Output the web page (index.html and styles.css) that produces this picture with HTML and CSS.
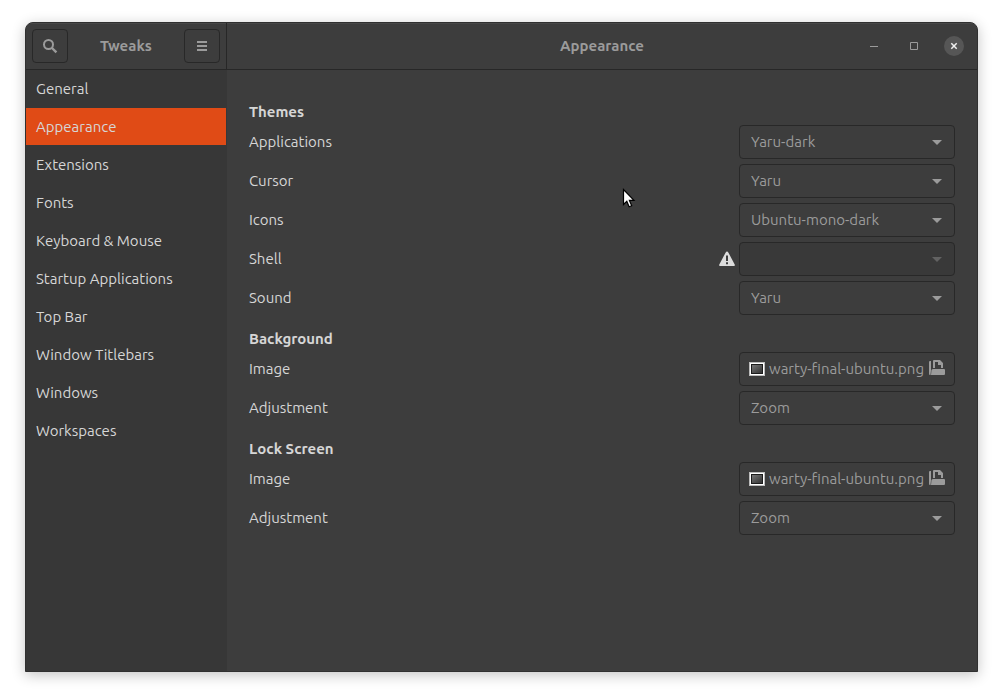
FILE: index.html
```html
<!DOCTYPE html>
<html lang="en">
<head>
<meta charset="utf-8">
<title>Tweaks</title>
<link rel="stylesheet" href="styles.css">
</head>
<body>
<div class="window">
  <header class="header">
    <div class="header-side">
      <button class="tool" type="button" aria-label="Search">
        <svg width="16" height="16" viewBox="0 0 16 16"><circle cx="6.5" cy="6.5" r="4.5" fill="none" stroke="currentColor" stroke-width="2"/><path d="M10 10l4.4 4.4" stroke="currentColor" stroke-width="2.4"/></svg>
      </button>
      <h1 class="title">Tweaks</h1>
      <button class="tool" type="button" aria-label="Menu">
        <svg width="16" height="16" viewBox="0 0 16 16"><path d="M3 3h10v2H3zM3 7h10v2H3zM3 11h10v2H3z" fill="currentColor"/></svg>
      </button>
    </div>
    <div class="header-main">
      <h2 class="title">Appearance</h2>
      <div class="controls">
        <button class="control" type="button" aria-label="Minimize"><svg width="16" height="16" viewBox="0 0 16 16"><path d="M4 8h8v1H4z" fill="currentColor"/></svg></button>
        <button class="control" type="button" aria-label="Maximize"><svg width="16" height="16" viewBox="0 0 16 16"><path d="M4.500 4.500h7v7h-7z" fill="none" stroke="currentColor"/></svg></button>
        <button class="control close" type="button" aria-label="Close"><svg width="16" height="16" viewBox="0 0 16 16"><path d="M5.300 5.300l5.400 5.400M10.700 5.300l-5.400 5.400" stroke="currentColor" stroke-width="1.500"/></svg></button>
      </div>
    </div>
  </header>
  <div class="body">
    <nav class="sidebar">
      <a class="item" href="#general">General</a>
      <a class="item active" href="#appearance" aria-current="page">Appearance</a>
      <a class="item" href="#extensions">Extensions</a>
      <a class="item" href="#fonts">Fonts</a>
      <a class="item" href="#keyboard">Keyboard &amp; Mouse</a>
      <a class="item" href="#startup">Startup Applications</a>
      <a class="item" href="#topbar">Top Bar</a>
      <a class="item" href="#titlebars">Window Titlebars</a>
      <a class="item" href="#windows">Windows</a>
      <a class="item" href="#workspaces">Workspaces</a>
    </nav>
    <main class="content">
      <section class="group">
        <h3 class="group-title">Themes</h3>
        <div class="rows">
          <div class="row"><label for="apps">Applications</label><span class="combo"><select id="apps"><option>Yaru-dark</option></select></span></div>
          <div class="row"><label for="cursor">Cursor</label><span class="combo"><select id="cursor"><option>Yaru</option></select></span></div>
          <div class="row"><label for="icons">Icons</label><span class="combo"><select id="icons"><option>Ubuntu-mono-dark</option></select></span></div>
          <div class="row"><label for="shell">Shell</label>
            <svg class="warning" width="16" height="16" viewBox="0 0 16 16"><path fill-rule="evenodd" d="M8 .5c.6 0 1 .3 1.300.9l6.400 12c.5 1 .2 1.600-.9 1.600H1.200c-1.100 0-1.400-.6-.9-1.600l6.400-12C7 .8 7.400.5 8 .5zM7 4.500v5.500h2V4.500zM7 11.200v2h2v-2z" fill="currentColor"/></svg>
            <span class="combo disabled"><select id="shell" disabled></select></span></div>
          <div class="row"><label for="sound">Sound</label><span class="combo"><select id="sound"><option>Yaru</option></select></span></div>
        </div>
      </section>
      <section class="group">
        <h3 class="group-title">Background</h3>
        <div class="rows">
          <div class="row"><label for="bg-image">Image</label>
            <button class="file" id="bg-image" type="button">
              <svg width="16" height="16" viewBox="0 0 16 16"><defs><linearGradient id="screen" x1="0" y1="0" x2="1" y2="1"><stop offset="0" stop-color="#777"/><stop offset="1" stop-color="#333"/></linearGradient></defs><path d="M0 1h16v14H0z" fill="#bbb"/><path d="M1 2h14v12H1z" fill="#fff"/><path d="M2 3h12v10H2z" fill="#1c1c1c"/><path d="M3 4h10v8H3z" fill="url(#screen)"/></svg>
              <span class="file-name">warty-final-ubuntu.png</span>
              <svg class="open" width="16" height="16" viewBox="0 1 16 16"><path d="M0 2q0-1 1-1h1v9.500L1.500 15H1q-1 0-1-1zM4 1q0-1 1-1h6l3 3v5h-2V5h-3V2H6v6H4zM4.500 9H15q1 0 1 1v4q0 1-1 1H2l.5-5q.2-1 2-1z" fill="currentColor"/></svg>
            </button></div>
          <div class="row"><label for="bg-adjust">Adjustment</label><span class="combo"><select id="bg-adjust"><option>Zoom</option></select></span></div>
        </div>
      </section>
      <section class="group">
        <h3 class="group-title">Lock Screen</h3>
        <div class="rows">
          <div class="row"><label for="lock-image">Image</label>
            <button class="file" id="lock-image" type="button">
              <svg width="16" height="16" viewBox="0 0 16 16"><path d="M0 1h16v14H0z" fill="#bbb"/><path d="M1 2h14v12H1z" fill="#fff"/><path d="M2 3h12v10H2z" fill="#1c1c1c"/><path d="M3 4h10v8H3z" fill="url(#screen)"/></svg>
              <span class="file-name">warty-final-ubuntu.png</span>
              <svg class="open" width="16" height="16" viewBox="0 1 16 16"><path d="M0 2q0-1 1-1h1v9.500L1.500 15H1q-1 0-1-1zM4 1q0-1 1-1h6l3 3v5h-2V5h-3V2H6v6H4zM4.500 9H15q1 0 1 1v4q0 1-1 1H2l.5-5q.2-1 2-1z" fill="currentColor"/></svg>
            </button></div>
          <div class="row"><label for="lock-adjust">Adjustment</label><span class="combo"><select id="lock-adjust"><option>Zoom</option></select></span></div>
        </div>
      </section>
    </main>
  </div>
</div>
<svg class="pointer" width="14" height="21" viewBox="0 0 14 21"><path d="M1.500 1.500v15l3.300-3.100 2.300 5.400 2.600-1.100-2.300-5.300H12z" fill="#fff" stroke="#000" stroke-width="1.200"/></svg>
</body>
</html>
```
FILE: styles.css
```css
* { box-sizing: border-box; }

body {
  margin: 0;
  min-height: 100vh;
  padding: 22px 25px 28px;
  display: flex;
  background: #fff;
  color: #d6d6d6;
  font: 15px/22px "Ubuntu", "Noto Sans", sans-serif;
}

h1, h2, h3 { margin: 0; font-size: inherit; }

svg { display: block; flex: none; }

button, select { font: inherit; color: #9b9b9b; }

.window {
  flex: 1;
  display: flex;
  flex-direction: column;
  background: #3d3d3d;
  border: 1px solid #303030;
  border-radius: 8px 8px 0 0;
  overflow: hidden;
  box-shadow: 0 3px 14px rgba(0, 0, 0, 0.24);
}

.header {
  display: flex;
  height: 47px;
  border-bottom: 1px solid #272727;
  box-shadow: inset 0 1px #484848;
}

.header-side {
  width: 201px;
  padding: 0 6px;
  border-right: 1px solid #272727;
  display: flex;
  align-items: center;
  justify-content: space-between;
}

.title { color: #9b9b9b; font-weight: 700; }

.tool {
  width: 36px;
  height: 34px;
  padding: 0;
  display: grid;
  place-items: center;
  background: none;
  border: 1px solid #282828;
  border-radius: 4px;
}

.header-main {
  flex: 1;
  padding: 0 13px;
  display: grid;
  grid-template-columns: 1fr auto 1fr;
  align-items: center;
}

.header-main .title { grid-column: 2; }

.controls {
  display: flex;
  justify-content: flex-end;
  gap: 20px;
}

.control {
  width: 20px;
  height: 20px;
  padding: 0;
  display: grid;
  place-items: center;
  background: none;
  border: 0;
  border-radius: 50%;
}

.close { background: #565656; color: #f0f0f0; }

.body { flex: 1; display: flex; }

.sidebar {
  width: 201px;
  padding-right: 1px;
  background: #373737;
  display: flex;
  flex-direction: column;
  gap: 1px;
}

.item {
  padding: 8px 10px 7px;
  color: #d6d6d6;
  text-decoration: none;
}

.active { background: #e04b16; }

.content {
  flex: 1;
  padding: 31px 22px;
  display: flex;
  flex-direction: column;
  gap: 13px;
}

.group-title { margin-bottom: 2px; }

.rows {
  display: flex;
  flex-direction: column;
  gap: 5px;
}

.row {
  display: flex;
  align-items: center;
  gap: 4px;
}

.row label { flex: 1; }

.warning { color: #dcdcdc; }

.combo, .file {
  width: 216px;
  height: 34px;
}

.combo {
  display: grid;
  align-items: center;
}

.combo select {
  grid-area: 1 / 1;
  width: 100%;
  height: 34px;
  padding: 0 30px 0 11px;
  appearance: none;
  background: none;
  border: 1px solid #282828;
  border-radius: 4px;
}

.combo::after {
  content: "";
  grid-area: 1 / 1;
  justify-self: end;
  margin-right: 13px;
  border: 5px solid transparent;
  border-top-color: #9b9b9b;
  border-bottom-width: 0;
  pointer-events: none;
}

.disabled select { background: #393939; opacity: 1; }
.disabled::after { border-top-color: #626262; }

.file {
  padding: 0 9px;
  display: flex;
  align-items: center;
  gap: 4px;
  background: none;
  border: 1px solid #282828;
  border-radius: 4px;
}

.file-name {
  flex: 1;
  text-align: left;
  white-space: nowrap;
}

.open { overflow: visible; }

.pointer {
  position: absolute;
  left: 622px;
  top: 188px;
}
```
